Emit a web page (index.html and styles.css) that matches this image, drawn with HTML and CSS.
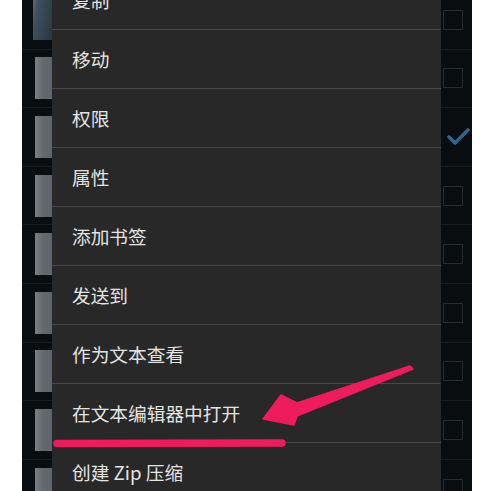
FILE: index.html
```html
<!DOCTYPE html>
<html lang="zh-CN">
<head>
<meta charset="utf-8">
<title>菜单</title>
<link rel="stylesheet" href="styles.css">
</head>
<body>
<div class="screen">
  <ul class="files">
    <li class="file"><span class="thumb thumb-img"></span><span class="check"></span></li>
    <li class="file"><span class="thumb"></span><span class="check"></span></li>
    <li class="file"><span class="thumb"></span><span class="check checked"><svg viewBox="0 0 24 18" width="24" height="18"><path d="M3 9 L9 15 L22 2" fill="none" stroke="#2b6690" stroke-width="3.6" stroke-linecap="round" stroke-linejoin="round"/></svg></span></li>
    <li class="file"><span class="thumb"></span><span class="check"></span></li>
    <li class="file"><span class="thumb"></span><span class="check"></span></li>
    <li class="file"><span class="thumb"></span><span class="check"></span></li>
    <li class="file"><span class="thumb"></span><span class="check"></span></li>
    <li class="file"><span class="thumb"></span><span class="check"></span></li>
    <li class="file"><span class="thumb"></span><span class="check"></span></li>
  </ul>
  <ul class="menu">
    <li class="menu-item">复制</li>
    <li class="menu-item">移动</li>
    <li class="menu-item">权限</li>
    <li class="menu-item">属性</li>
    <li class="menu-item">添加书签</li>
    <li class="menu-item">发送到</li>
    <li class="menu-item">作为文本查看</li>
    <li class="menu-item">在文本编辑器中打开</li>
    <li class="menu-item">创建 Zip 压缩</li>
  </ul>
</div>
<svg class="annot" viewBox="0 0 503 491" width="503" height="491">
  <polygon points="263,419 281,395 297,403 410,366 413,369 297,416 294,425" fill="#ee1c5d" stroke="#ee1c5d" stroke-width="1.5" stroke-linejoin="round"/>
  <line x1="57" y1="443.5" x2="282" y2="443" stroke="#ee1c5d" stroke-width="7.5" stroke-linecap="round"/>
</svg>
</body>
</html>
```

FILE: styles.css
```css
html, body {
  margin: 0;
  padding: 0;
  background: #ffffff;
}

body {
  position: relative;
  width: 503px;
  height: 491px;
  overflow: hidden;
  font-family: "Noto Sans CJK SC", "Noto Sans", sans-serif;
}

.screen {
  position: relative;
  margin-left: 22px;
  width: 450px;
  height: 491px;
  overflow: hidden;
  background: #0a0d0f;
}

.files {
  list-style: none;
  margin: -9px 0 0 0;
  padding: 0;
}

.file {
  height: 57.6px;
  border-bottom: 1px solid #181c1f;
  display: flex;
  align-items: center;
  justify-content: space-between;
  padding-left: 13px;
  padding-right: 9px;
}

.thumb {
  width: 30px;
  height: 42px;
  background: linear-gradient(90deg, #7a7f81 0, #646a6d 25%, #575c5f 100%);
}

.thumb-img {
  margin-left: -2px;
  width: 32px;
  height: 40px;
  background: linear-gradient(100deg, #5c6c78 0, #3e505d 15%, #2b3a45 60%, #1f2b33 100%);
}

.check {
  width: 18px;
  height: 18px;
  border: 1px solid #262b2e;
  position: relative;
}

.check.checked {
  border-color: transparent;
}

.check svg {
  position: absolute;
  left: 2px;
  top: 0;
}

.menu {
  position: absolute;
  left: 30px;
  top: -29px;
  width: 389px;
  margin: 0;
  padding: 0;
  list-style: none;
  background: #282828;
}

.menu-item {
  height: 58px;
  border-bottom: 1px solid #484848;
  display: flex;
  align-items: center;
  padding-left: 20px;
  font-size: 18.7px;
  line-height: 1;
  color: #e4e4e4;
}

.annot {
  position: absolute;
  left: 0;
  top: 0;
  pointer-events: none;
}
```
